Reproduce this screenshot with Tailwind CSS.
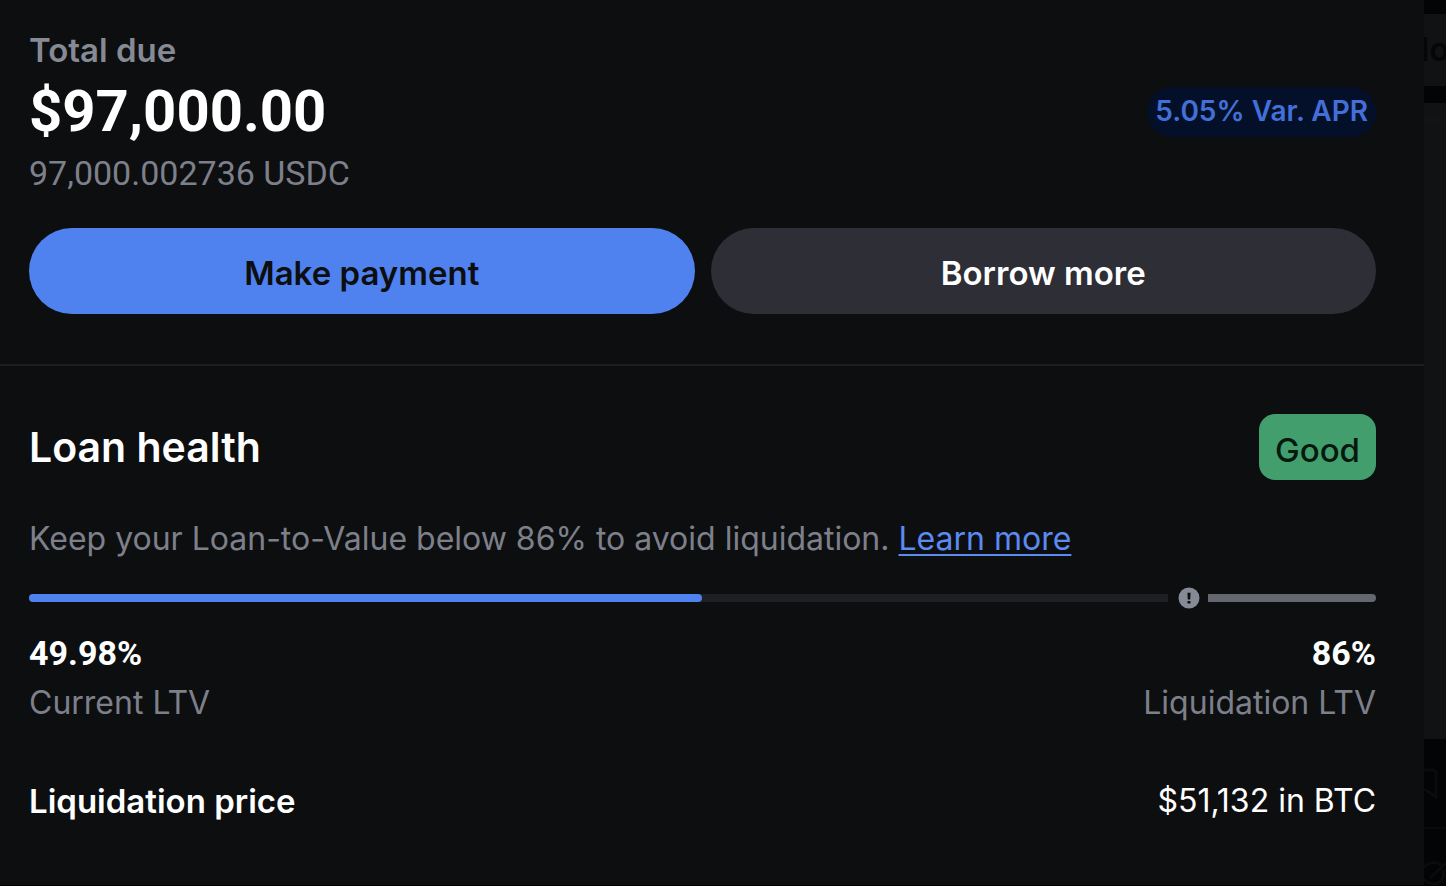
<!DOCTYPE html>
<html lang="en">
  <head>
    <meta charset="UTF-8" />
    <meta name="viewport" content="width=device-width, initial-scale=1.0" />
    <title>Loan details</title>
    <script src="https://cdn.jsdelivr.net/npm/@tailwindcss/browser@4"></script>
  </head>
  <body class="flex min-h-screen border-b-2 border-black bg-[#030406] font-['Inter',sans-serif] text-[32px] leading-10 text-white">
    <main class="min-w-0 flex-1 bg-[#0d0e10]">
      <!-- Balance -->
      <section class="border-b-2 border-[#1d1e21] pt-[30px] pr-12 pb-[50px] pl-[29px]">
        <div class="flex items-center justify-between">
          <div>
            <h1 class="text-[33px] font-semibold text-[#868a95]">Total due</h1>
            <p class="font-['Roboto',sans-serif] text-[58px] leading-[83px] font-bold">$97,000.00</p>
            <p class="font-['Roboto',sans-serif] text-[34px] text-[#7d808a]">97,000.002736 USDC</p>
          </div>
          <span class="rounded-full bg-[#04102a] px-2 pt-1 pb-1.5 text-[28px] font-semibold text-[#4270d8]">5.05% Var. APR</span>
        </div>
        <div class="mt-[35px] grid grid-cols-2 gap-4">
          <button type="button" class="h-[86px] rounded-full bg-[#4f82ef] pt-1 text-[33px] font-semibold text-[#0d0e10]">Make payment</button>
          <button type="button" class="h-[86px] rounded-full bg-[#2d2e36] pt-1 text-[33px] font-semibold">Borrow more</button>
        </div>
      </section>

      <!-- Loan health -->
      <section class="pt-12 pr-12 pb-12 pl-[29px]">
        <div class="flex items-center justify-between">
          <h2 class="text-[41px] font-semibold">Loan health</h2>
          <span class="rounded-2xl bg-[#429f6d] px-4 pt-4 pb-2.5 text-[33px] font-medium text-[#07180e]">Good</span>
        </div>
        <p class="mt-[39px] text-[#7d808a]">
          Keep your Loan-to-Value below 86% to avoid liquidation.
          <a href="#" class="text-[#5b8af0] underline decoration-2 underline-offset-4">Learn more</a>
        </p>
        <!-- LTV bar -->
        <div class="mt-7 flex h-[22px] items-center" role="img" aria-label="Current LTV 49.98%, liquidation at 86%">
          <div class="h-2 flex-1 rounded-l-full bg-[#1e1f22]">
            <div class="h-2 rounded-full bg-[#4f82ef]" style="width: 59.1%"></div>
          </div>
          <svg class="mr-2 ml-2.5 size-[22px]" viewBox="0 0 22 22" fill="none">
            <circle cx="11" cy="11" r="10.5" fill="#868a96" />
            <path d="M9.4 5.7h3.2l-.4 6.7H9.8zM9.5 13.9h3v2.6h-3z" fill="#0d0e10" />
          </svg>
          <div class="h-2 w-1/8 rounded-r-full bg-[#646770]"></div>
        </div>
        <dl class="mt-6 flex justify-between">
          <div class="flex flex-col-reverse gap-2.5">
            <dt class="text-[#7d808a]">Current LTV</dt>
            <dd class="font-['Roboto',sans-serif] text-[34px] font-bold">49.98%</dd>
          </div>
          <div class="flex flex-col-reverse gap-2.5 text-right">
            <dt class="text-[#7d808a]">Liquidation LTV</dt>
            <dd class="font-['Roboto',sans-serif] text-[34px] font-bold">86%</dd>
          </div>
        </dl>
        <dl class="mt-[58px] flex justify-between">
          <dt class="text-[33px] font-semibold">Liquidation price</dt>
          <dd>$51,132 in BTC</dd>
        </dl>
      </section>
    </main>

    <!-- Page behind the panel -->
    <aside class="flex w-[22px] flex-col overflow-hidden pt-3.5" aria-hidden="true">
      <div class="flex h-[72px] items-center justify-center bg-[#111214] font-semibold text-[#050607]">lo</div>
      <div class="mt-[17px] h-[636px] bg-[#111214] pt-4">
        <div class="h-0.5 bg-[#141412]"></div>
      </div>
      <svg class="mt-7 h-9 w-[22px]" viewBox="0 0 22 36" fill="none" stroke="#0a0b0d" stroke-width="3">
        <path d="M0 3h10l2 2v25L0 22" />
      </svg>
      <div class="mt-6 h-0.5 shrink-0 bg-[#090a0c]"></div>
      <svg class="mt-8 h-6 w-[22px] shrink-0" viewBox="0 0 22 24" fill="none" stroke="#0a0b0d" stroke-width="3">
        <path d="M17 4C12 0 4 1 0 6M19 9c2 5-1 13-8 14C6 23 2 21 0 18M22 2 6 17" />
      </svg>
    </aside>
  </body>
</html>
